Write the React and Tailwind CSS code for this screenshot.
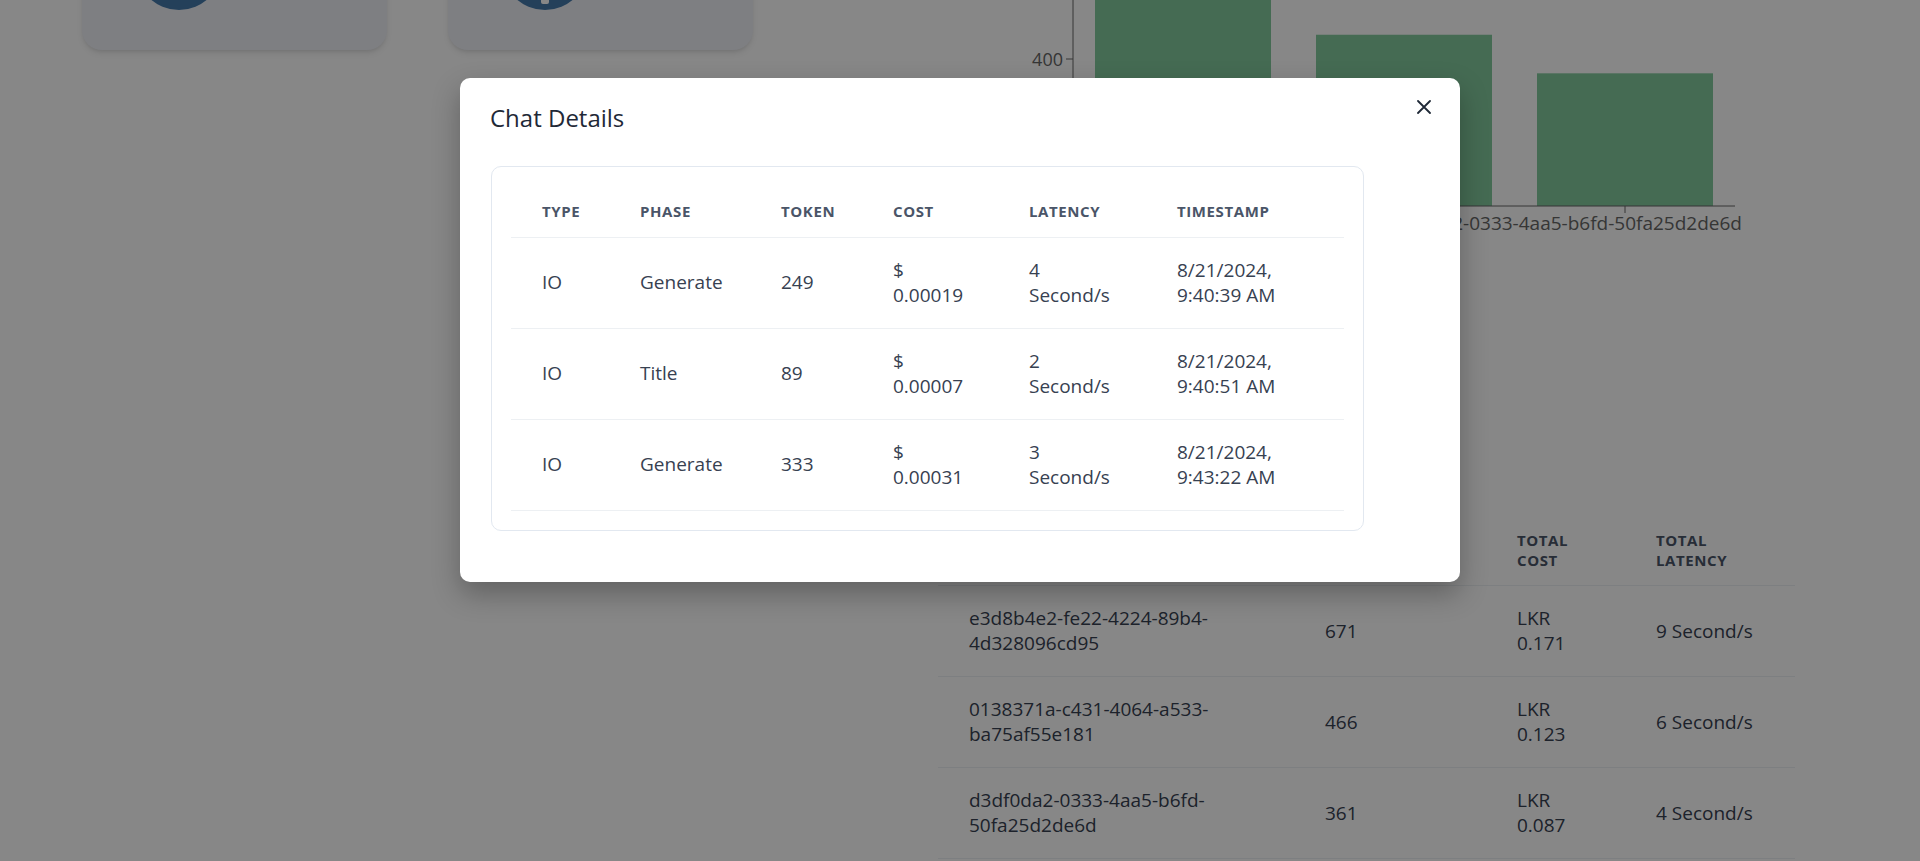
import React from 'react';

const chatRows = [
    { type: 'IO', phase: 'Generate', token: 249, cost: '0.00019', latency: 4, date: '8/21/2024,', time: '9:40:39 AM' },
    { type: 'IO', phase: 'Title', token: 89, cost: '0.00007', latency: 2, date: '8/21/2024,', time: '9:40:51 AM' },
    { type: 'IO', phase: 'Generate', token: 333, cost: '0.00031', latency: 3, date: '8/21/2024,', time: '9:43:22 AM' },
];

const sessions = [
    { a: 'e3d8b4e2-fe22-4224-89b4-', b: '4d328096cd95', tokens: 671, cost: '0.171', latency: 9 },
    { a: '0138371a-c431-4064-a533-', b: 'ba75af55e181', tokens: 466, cost: '0.123', latency: 6 },
    { a: 'd3df0da2-0333-4aa5-b6fd-', b: '50fa25d2de6d', tokens: 361, cost: '0.087', latency: 4 },
];

// recharts-like bar chart, scaled 0.3675px per token
const bars = [
    { x: 157, value: 671 },
    { x: 378, value: 466 },
    { x: 599, value: 361 },
];

const StatCard = ({ withIcon }) => (
    <div className="w-[305px] h-[200px] -mt-[150px] rounded-[20px] bg-[#eef0f6] shadow-md pt-[74px] pl-[54px]">
        <svg width="86" height="86" viewBox="0 0 86 86">
            <circle cx="43" cy="43" r="43" fill="#4479aa" />
            {withIcon && <rect x="39" y="56" width="8" height="24" rx="2" fill="#ffffff" />}
        </svg>
    </div>
);

const UsageChart = () => {
    const base = 206;
    const scale = 0.3675;
    return (
        <svg width="857" height="250" className="block">
            {bars.map((b, i) => (
                <rect key={i} x={b.x} y={base - b.value * scale} width="176" height={b.value * scale} fill="#82ca9d" />
            ))}
            <line x1="135" y1="0" x2="135" y2={base} stroke="#666" />
            <line x1="128" y1={base - 400 * scale} x2="135" y2={base - 400 * scale} stroke="#666" />
            <text x="125" y={base - 400 * scale + 7} textAnchor="end" fill="#666" fontSize="18" fontFamily="Open Sans, sans-serif">400</text>
            <line x1="135" y1={base} x2="797" y2={base} stroke="#666" />
            {bars.map((b, i) => (
                <line key={i} x1={b.x + 88} y1={base} x2={b.x + 88} y2={base + 7} stroke="#666" />
            ))}
            <text x="804" y="230" textAnchor="end" fill="#666" fontSize="19" fontFamily="Open Sans, sans-serif">d3df0da2-0333-4aa5-b6fd-50fa25d2de6d</text>
        </svg>
    );
};

const CloseIcon = () => (
    <svg width="14" height="14" viewBox="0 0 14 14" className="-mr-[2px] -mt-[2px] shrink-0">
        <path d="M1 1 L13 13 M13 1 L1 13" stroke="#1f2937" strokeWidth="1.8" strokeLinecap="round" />
    </svg>
);

const App = () => {
    return (
        <div className="relative w-[1920px] h-[861px] overflow-hidden bg-white font-['Open_Sans',sans-serif]">
            {/* page underneath */}
            <div className="flex h-full">
                <div className="w-[938px] pl-[82px] flex gap-[61px] items-start">
                    <StatCard />
                    <StatCard withIcon />
                </div>
                <div className="w-[857px] flex flex-col">
                    <UsageChart />
                    <table className="mt-[265px] w-[857px] table-fixed">
                        <colgroup>
                            <col className="w-[356px]" />
                            <col className="w-[192px]" />
                            <col className="w-[139px]" />
                            <col className="w-[170px]" />
                        </colgroup>
                        <thead>
                            <tr>
                                {[['Chat', 'ID'], ['Total', 'Tokens'], ['Total', 'Cost'], ['Total', 'Latency']].map((h, i) => (
                                    <th key={i} className="pl-[31px] py-[15px] text-left text-[15px] leading-5 font-bold uppercase tracking-[0.04em] text-[#4a5568] border-b border-[#edf0f3]">
                                        {h[0]}<br />{h[1]}
                                    </th>
                                ))}
                            </tr>
                        </thead>
                        <tbody>
                            {sessions.map((s, i) => (
                                <tr key={i}>
                                    <td className="pl-[31px] py-5 text-[19px] leading-[25px] text-[#374151] border-b border-[#edf0f3]">{s.a}<br />{s.b}</td>
                                    <td className="pl-[31px] py-5 text-[19px] leading-[25px] text-[#374151] border-b border-[#edf0f3]">{s.tokens}</td>
                                    <td className="pl-[31px] py-5 text-[19px] leading-[25px] text-[#374151] border-b border-[#edf0f3]">LKR<br />{s.cost}</td>
                                    <td className="pl-[31px] py-5 text-[19px] leading-[25px] text-[#374151] border-b border-[#edf0f3]">{s.latency} Second/s</td>
                                </tr>
                            ))}
                        </tbody>
                    </table>
                </div>
            </div>

            {/* modal */}
            <div className="absolute inset-0 bg-black/[0.47] flex justify-center items-start pt-[78px]">
                <div className="w-[1000px] bg-white rounded-[10px] shadow-[0_12px_28px_rgba(0,0,0,0.28)] pt-[24px] pb-[51px] px-[31px]">
                    <div className="flex items-start justify-between">
                        <h2 className="text-[24px] leading-[32px] text-[#1f2937] -ml-px">Chat Details</h2>
                        <CloseIcon />
                    </div>
                    <div className="mt-[32px] w-[873px] border border-[#e2e8f0] rounded-[10px] p-[19px]">
                        <table className="w-[833px] table-fixed">
                            <colgroup>
                                <col className="w-[98px]" />
                                <col className="w-[141px]" />
                                <col className="w-[112px]" />
                                <col className="w-[136px]" />
                                <col className="w-[148px]" />
                                <col className="w-[198px]" />
                            </colgroup>
                            <thead>
                                <tr>
                                    {['Type', 'Phase', 'Token', 'Cost', 'Latency', 'Timestamp'].map(h => (
                                        <th key={h} className="h-[51px] pl-[31px] text-left text-[15px] leading-5 font-bold uppercase tracking-[0.04em] text-[#4a5568] border-b border-[#edf0f3]">
                                            {h}
                                        </th>
                                    ))}
                                </tr>
                            </thead>
                            <tbody>
                                {chatRows.map((r, i) => (
                                    <tr key={i}>
                                        <td className="pl-[31px] py-5 text-[19px] leading-[25px] text-[#374151] border-b border-[#edf0f3]">{r.type}</td>
                                        <td className="pl-[31px] py-5 text-[19px] leading-[25px] text-[#374151] border-b border-[#edf0f3]">{r.phase}</td>
                                        <td className="pl-[31px] py-5 text-[19px] leading-[25px] text-[#374151] border-b border-[#edf0f3]">{r.token}</td>
                                        <td className="pl-[31px] py-5 text-[19px] leading-[25px] text-[#374151] border-b border-[#edf0f3]">$<br />{r.cost}</td>
                                        <td className="pl-[31px] py-5 text-[19px] leading-[25px] text-[#374151] border-b border-[#edf0f3]">{r.latency}<br />Second/s</td>
                                        <td className="pl-[31px] py-5 text-[19px] leading-[25px] text-[#374151] border-b border-[#edf0f3]">{r.date}<br />{r.time}</td>
                                    </tr>
                                ))}
                            </tbody>
                        </table>
                    </div>
                </div>
            </div>
        </div>
    );
};

export default App;
